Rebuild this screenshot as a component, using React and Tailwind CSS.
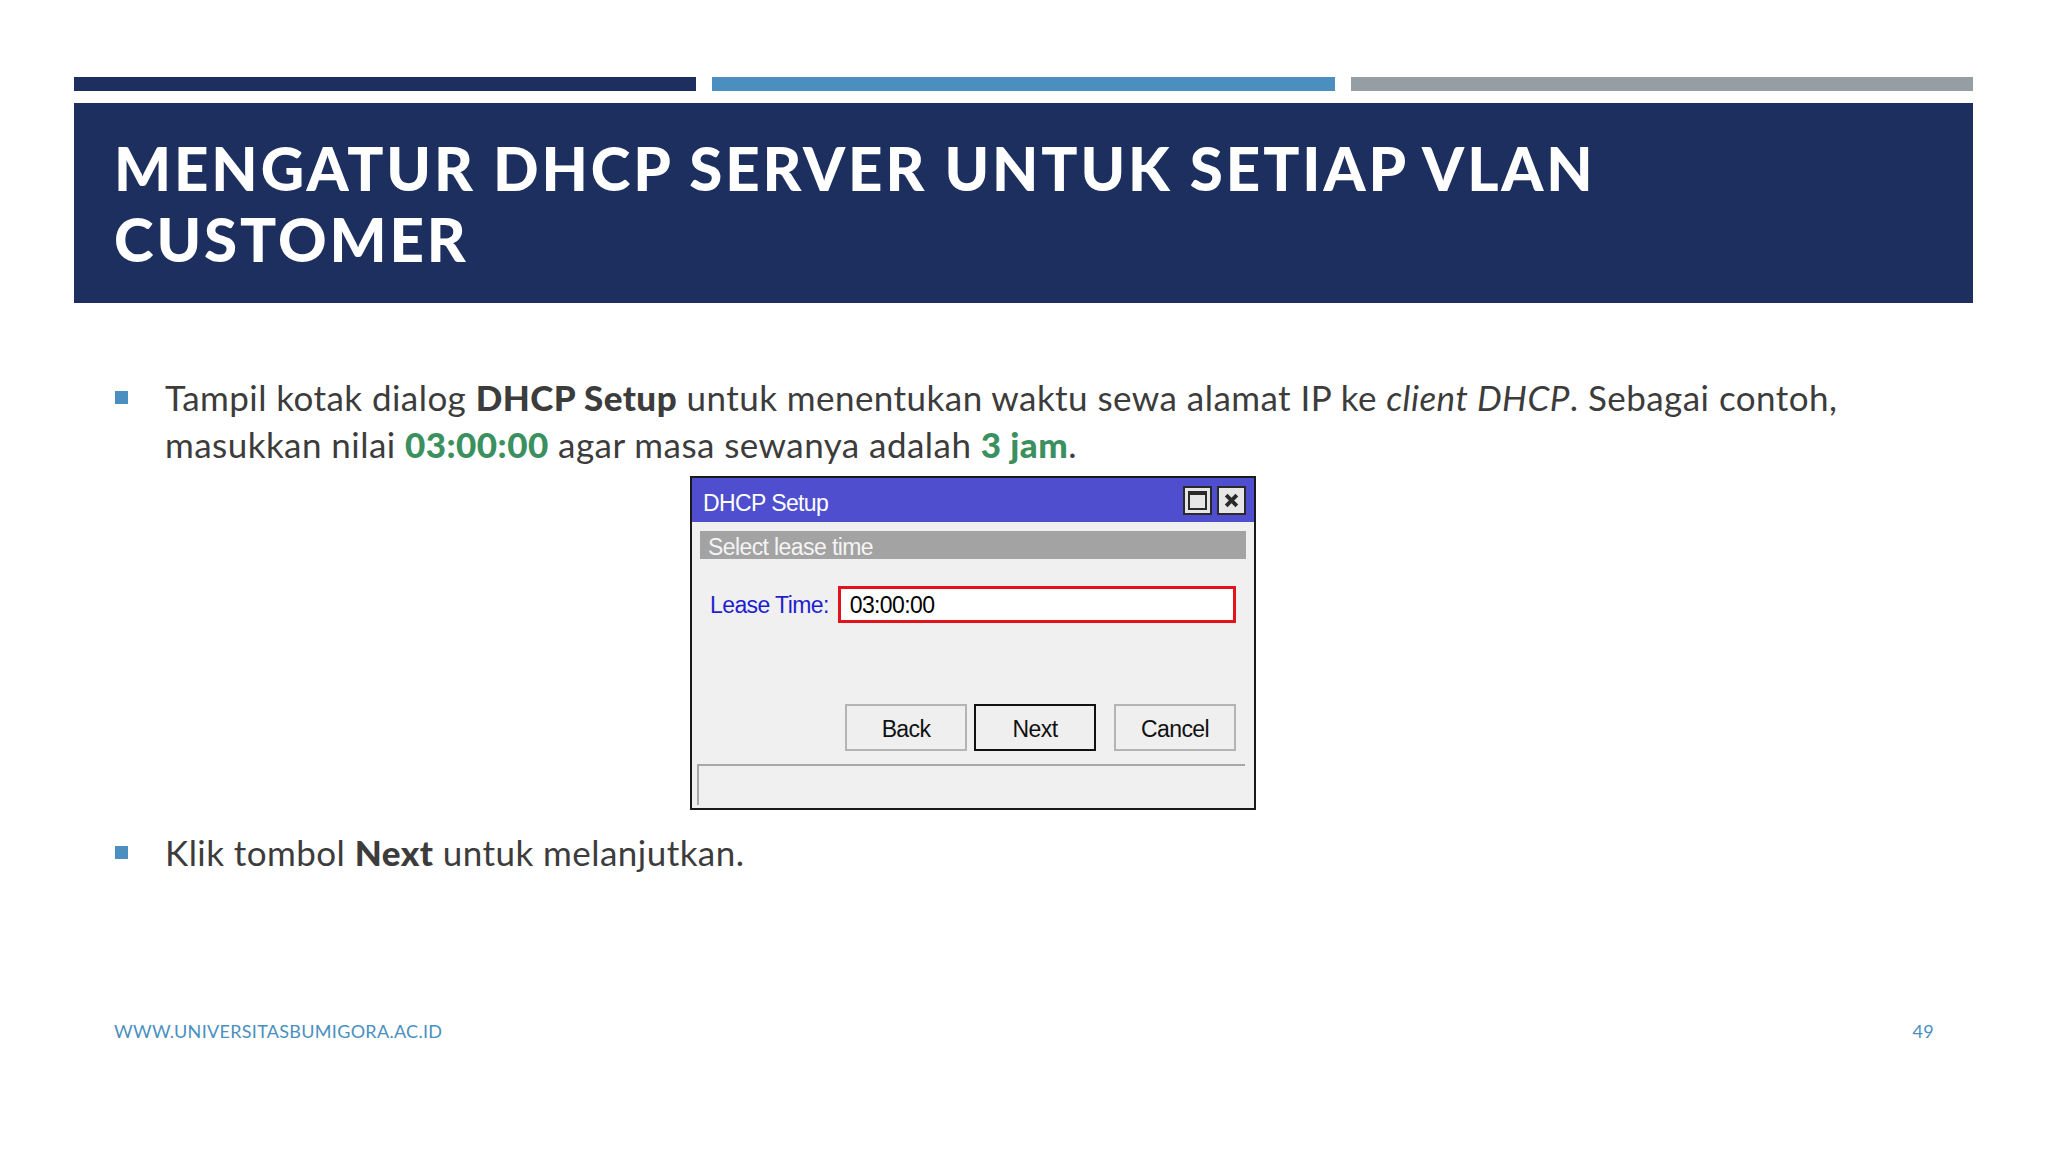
import React from "react";

const Bullet = ({ children }) => (
  <div className="flex items-start">
    <div className="w-[50px] shrink-0 pt-[17px]">
      <div className="w-[13px] h-[13px] bg-[#4a8fbf]" />
    </div>
    <div className="flex-1">{children}</div>
  </div>
);

const DhcpDialog = () => {
  return (
    <div
      className="w-[566px] h-[334px] border-2 border-[#1a1a1a] bg-[#f0f0f0] flex flex-col text-[23px] tracking-[-0.6px]"
      style={{ fontFamily: '"Liberation Sans", Arial, sans-serif' }}
    >
      <div className="h-[44px] shrink-0 bg-[#4e4ecf] flex items-center justify-between pl-[11px] pr-[8px]">
        <span className="text-white pt-[7px]">DHCP Setup</span>
        <div className="flex gap-[5px]">
          <div className="w-[29px] h-[29px] bg-[#e6e6e6] border-2 border-[#2a2a2a] flex items-center justify-center">
            <div className="w-[19px] h-[19px] border-2 border-t-[4px] border-[#2a2a2a]" />
          </div>
          <div className="w-[29px] h-[29px] bg-[#e6e6e6] border-2 border-[#2a2a2a] flex items-center justify-center">
            <svg width="17" height="17" viewBox="0 0 16 16">
              <path d="M3 3 L13 13 M13 3 L3 13" stroke="#2a2a2a" strokeWidth="3.6" />
            </svg>
          </div>
        </div>
      </div>

      <div className="mt-[9px] mx-[8px] h-[28px] shrink-0 bg-[#a3a3a3] flex items-center pl-[8px]">
        <span className="text-[#f4f4f4] pt-[4px]">Select lease time</span>
      </div>

      <div className="mt-[27px] h-[37px] shrink-0 flex items-center pl-[18px] pr-[18px] gap-[9px]">
        <span className="text-[#1f1fcf] pt-[2px]">Lease Time:</span>
        <div className="flex-1 h-[37px] border-[3px] border-[#e3131d] bg-white flex items-center pl-[9px]">
          <span className="text-black pt-[2px]">03:00:00</span>
        </div>
      </div>

      <div className="mt-[81px] shrink-0 flex justify-end pr-[18px]">
        <button className="w-[122px] h-[47px] border-2 border-[#b4b4b4] bg-[#efefef] text-[#111]">
          Back
        </button>
        <button className="ml-[7px] w-[122px] h-[47px] border-2 border-[#111] bg-[#efefef] text-[#111]">
          Next
        </button>
        <button className="ml-[18px] w-[122px] h-[47px] border-2 border-[#b4b4b4] bg-[#efefef] text-[#111]">
          Cancel
        </button>
      </div>

      <div className="mt-[13px] ml-[5px] mr-[9px] flex-1 mb-[3px] border-t-2 border-l-2 border-[#a8a8a8]" />
    </div>
  );
};

export default function App() {
  return (
    <div
      className="w-[2048px] h-[1152px] bg-white flex flex-col overflow-hidden"
      style={{ fontFamily: 'Lato, "Noto Sans", sans-serif' }}
    >
      <div className="pt-[77px] pl-[74px] pr-[75px]">
        <div className="flex gap-[16px] h-[14px]">
          <div className="flex-1 bg-[#1c2f5e]" />
          <div className="flex-1 bg-[#4a8fbf]" />
          <div className="flex-1 bg-[#959fa3]" />
        </div>

        <div className="mt-[12px] h-[200px] bg-[#1c2f5e] pl-[40px] pt-[30px]">
          <h1 className="text-white font-black text-[60px] leading-[71px] tracking-[2.9px]">
            MENGATUR DHCP SERVER UNTUK SETIAP VLAN
            <br />
            CUSTOMER
          </h1>
        </div>
      </div>

      <div className="pl-[115px] pr-[75px] mt-[71px] text-[#3c3c3c] text-[35px] leading-[47px] tracking-[0.45px]">
        <Bullet>
          <p className="whitespace-nowrap">
            Tampil kotak dialog <b className="font-black">DHCP Setup</b> untuk
            menentukan waktu sewa alamat IP ke <i>client DHCP</i>. Sebagai
            contoh,
            <br />
            masukkan nilai{" "}
            <b className="font-black text-[#3b9060]">03:00:00</b> agar masa
            sewanya adalah <b className="font-black text-[#3b9060]">3 jam</b>.
          </p>
        </Bullet>

        <div className="mt-[8px] ml-[575px]">
          <DhcpDialog />
        </div>

        <div className="mt-[19px]">
          <Bullet>
            <p>
              Klik tombol <b className="font-black">Next</b> untuk melanjutkan.
            </p>
          </Bullet>
        </div>
      </div>

      <div className="mt-auto pb-[109px] pl-[114px] pr-[114px] flex justify-between items-center text-[#4a8fbf] text-[18px] leading-[24px] tracking-[0.3px]">
        <span>WWW.UNIVERSITASBUMIGORA.AC.ID</span>
        <span>49</span>
      </div>
    </div>
  );
}
